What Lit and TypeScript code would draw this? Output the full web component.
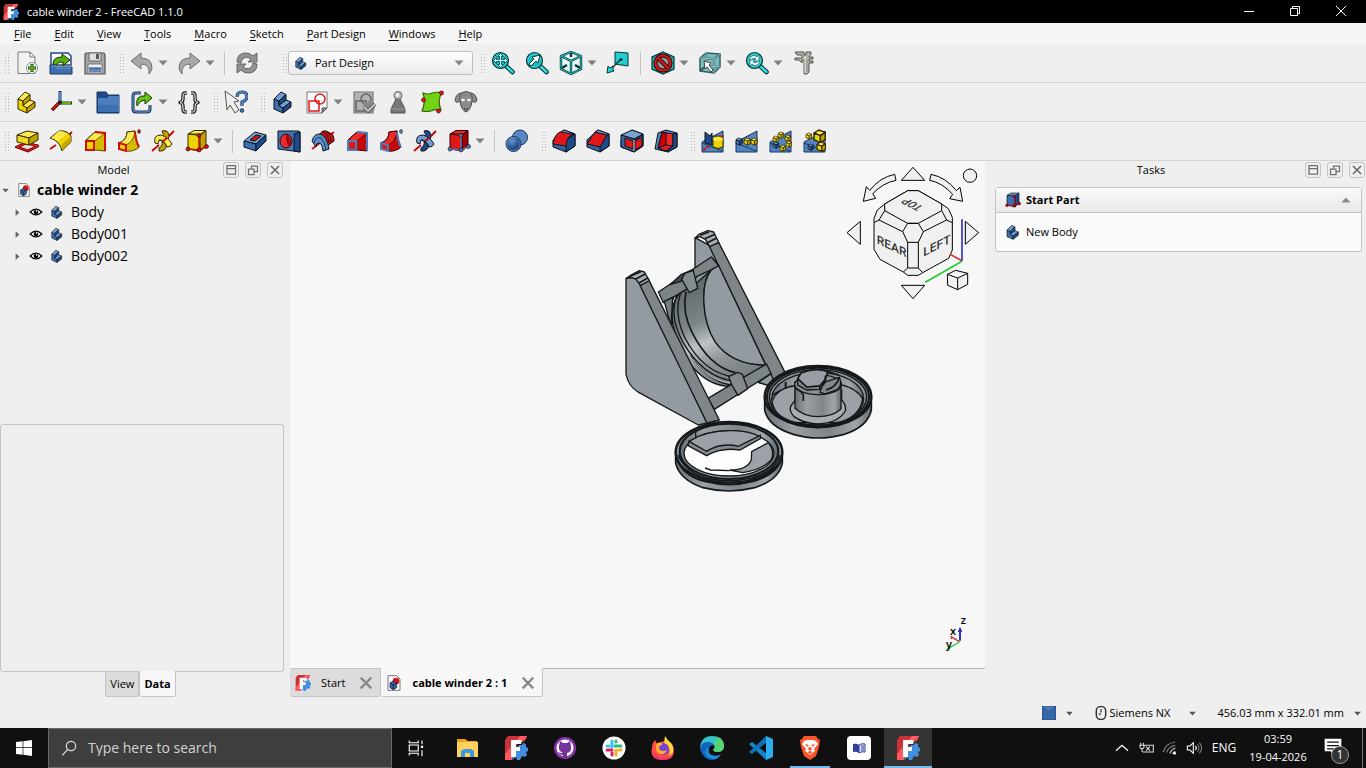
import { css, html, LitElement, nothing, svg } from 'lit';
import type { SVGTemplateResult } from 'lit';
import { customElement, property, state } from 'lit/decorators.js';
import { classMap } from 'lit/directives/class-map.js';

const BLUE = ['#729fcf', '#3f6fae', '#204a87', '#0b1521'];
const YELLOW = ['#fce94f', '#edd400', '#c4a000', '#302b00'];
const RED = ['#ef2929', '#e01818', '#a40000', '#280000'];

// stepped block, the Part Design body
const body = ([top, front, side, line]: string[]) => svg`
    <g stroke=${line} stroke-width="1" stroke-linejoin="round">
        <path fill=${front} d="M3 9l5 2v4.5l4 2.500V23l-9-4z" />
        <path fill=${top} d="M3 9l7-7 5 2.500L8 11z" />
        <path fill=${side} d="M8 11l7-6.500V10l-7 5.500z" />
        <path fill=${top} d="M8 15.500L15 10l5 2-8 6z" />
        <path fill=${side} d="M12 18l8-6v5l-8 6z" />
    </g>`;

const cube = ([top, front, side, line]: string[]) => svg`
    <g stroke=${line} stroke-width="1" stroke-linejoin="round">
        <path fill=${top} d="M3 5l6-3.500h12L16 5z" />
        <path fill=${front} d="M3 5l12 1.500V22L3 20z" />
        <path fill=${side} d="M15 6.500l6-5V17l-6 5z" />
    </g>`;

const datum = (face: string[], accent: string) => svg`
    ${cube(face)}
    <path d="M14 7v13M3 20l11 1 7-3" stroke=${accent} stroke-width="1.500" fill="none" />
    <g fill=${accent} stroke="#280000" stroke-width=".6">
        <circle cx="14" cy="6.500" r="1.800" /><circle cx="3" cy="20" r="2" />
        <circle cx="14" cy="21" r="2" /><circle cx="21.500" cy="17.500" r="2" />
    </g>`;

const loft = (face: string[], edge: string) => svg`
    <path d="M3 11 12 3 22 4v18l-9-1H3z" fill=${face[1]} stroke=${face[3]} stroke-linejoin="round" />
    <path d="M3 11 12 3 22 4 12 12z" fill=${face[0]} stroke=${face[3]} stroke-width=".8" />
    <path d="M12 12 22 4v18l-10-1z" fill=${face[2]} opacity=".5" />
    <path d="M12 3l10 1v18" fill="none" stroke=${edge} stroke-width="2" />
    <path d="M3 12h8v9H3z" fill=${face[1]} stroke=${edge} stroke-width="2" />`;

const pipe = (face: string[], edge: string) => svg`
    <path d="M2 14Q10 11 10 3l8-1q1 11 4 16-5 5-13 4z" fill=${face[1]} stroke=${face[3]} />
    <path d="M10 3l8-1q-1 11-9 14l-7-2q8-3 8-11z" fill=${face[0]} stroke=${face[3]} stroke-width=".8" />
    <path d="M9 16q8-3 9-12 1 9 4 14-5 5-13 4z" fill=${face[2]} opacity=".5" />
    <path d="M18 3q1 10 4 15" fill="none" stroke=${edge} stroke-width="2" />
    <path d="M2 14l7 2v6l-7-2z" fill=${face[1]} stroke=${edge} stroke-width="2" />
    <ellipse cx="22" cy="2.500" rx="1.500" ry="2" fill=${edge} stroke="#222" stroke-width=".5" />`;

const helix = (face: string[]) => svg`
    <g stroke=${face[3]} stroke-linejoin="round">
        <path d="M11 2q7-2 7 6l-2 4-5-4q3-2 0-6z" fill=${face[2]} />
        <path d="M8 22q7 1 8-7l-5-3q1 5-3 7z" fill=${face[2]} />
        <path d="M4 14Q2 6 10 6q7 2 11 9-1 3-5 3-4-7-8-7l-1 4z" fill=${face[0]} />
        <path d="M8 11q5-1 8 7" fill="none" stroke-width=".8" />
    </g>
    <path d="M1 22l7-6M12 12l4-3M18 7l5-5" stroke="#cc0000" stroke-width="1.800" />`;

const lens = (inner: SVGTemplateResult) => svg`
    <path d="M14.500 14.500l7 6.500" stroke="#042a2a" stroke-width="4.500" stroke-linecap="round" />
    <path d="M14.500 14.500l7 6.500" stroke="#34e0e2" stroke-width="2.500" stroke-linecap="round" />
    <circle cx="9.500" cy="9.500" r="8" fill="#16a5a8" stroke="#063c3e" stroke-width="1.200" />
    <circle cx="9.500" cy="9.500" r="6.500" fill="#1cb9bc" stroke="#4ce0e0" stroke-width=".8" />
    ${inner}`;

const miniCube = (x: number, y: number, s: number, c: string[]) => svg`
    <g transform="translate(${x} ${y}) scale(${s})" stroke=${c[3]} stroke-width=".9" stroke-linejoin="round">
        <path fill=${c[0]} d="M0 2l3-2 4 1.500-3 2z" /><path fill=${c[1]} d="M0 2l4 1.500V8L0 6z" />
        <path fill=${c[2]} d="M4 3.500l3-2V6L4 8z" />
    </g>`;

const slab = svg`
    <path d="M1 13 22 2v21H1z" fill="#5484bf" stroke="#17365f" />
    <path d="M1 14l20 8" stroke="#17365f" />`;

const chamfered = (red: SVGTemplateResult) => svg`
    <g stroke="#0b1521" stroke-linejoin="round">
        <path d="M1 11 12 1l11 4v12l-9 6-13-5z" fill="#3465a4" />
        <path d="M14 11l9-6v12l-9 6z" fill="#204a87" />
        ${red}
    </g>`;

const freecad = svg`
    <path d="M4 0h19l-3 6-6 1-8 17H1V4z" fill="#cb333b" />
    <path d="M16 0h7l-2 4H11L8 24H1v-6z" fill="#ff585d" />
    <path d="M15 9h3l1-2 3 1v3l2 1v3l-2 1 1 3-2 2-3-1-2 4h-3l-1-3-4 3 2-10z" fill="#418fde" />
    <path d="M7 4h11l-1 4h-5v3h4v4h-4v6H7z" fill="#fff" />`;

const documentIcon = svg`
    <path d="M3 1h13l5 5v17H3z" fill="#fafafa" stroke="#777" stroke-width="1.500" />
    <circle cx="15" cy="9" r="5" fill="#dd1111" />
    <path d="M6 12l5-3 5 3v7l-5 3-5-3z" fill="#3465a4" stroke="#0b1521" />
    <path d="M6 12l5 3 5-3M11 15v7" stroke="#0b1521" fill="none" />`;

const icons: Record<string, SVGTemplateResult> = {
    freecad,
    document: documentIcon,
    body: body(BLUE),
    part: body(YELLOW),
    startpart: datum(BLUE, '#cc0000'),
    new: svg`
        <path d="M3 1h12l5 5v16.500H3z" fill="#f2f2f0" stroke="#777" />
        <path d="M15 1v5h5z" fill="#fff" stroke="#777" />
        <circle cx="17" cy="17" r="5.500" fill="#fff" stroke="#888" />
        <path d="M17 13v8M13 17h8" stroke="#163b05" stroke-width="3" />
        <path d="M17 13.500v7M13.500 17h7" stroke="#5fc018" stroke-width="1.500" />`,
    open: svg`
        <path d="M2 2h17l3 3v9H2z" fill="#fff" stroke="#204a87" stroke-width="1.500" />
        <path d="M4 13q0-7 9-7V3l8 6-7 6v-4q-6 0-7 4z" fill="#58b010" stroke="#173004" />
        <path d="M1 14h6v2h16v7H1z" fill="#3c70b4" stroke="#17365f" />
        <path d="M2 15h5l1 2h14" fill="none" stroke="#729fcf" />`,
    save: svg`
        <path d="M3 2h18l1 2v19H2V3z" fill="#a6a6a6" stroke="#555" stroke-width="1.200" />
        <path d="M6 2h12v8H6z" fill="#dedede" stroke="#666" /><path d="M13 3h3v5h-3z" fill="#555" />
        <path d="M5 13h14v9H5z" fill="#eee" stroke="#777" /><path d="M6 17h12v4H6z" fill="#6386b4" />
        <path d="M6 17h12" stroke="#204a87" />`,
    undo: svg`<path d="M1 10 11 2v5q11 0 11 10-1 4-3 6 1-10-8-10v5z" fill="#a8a8a8" stroke="#707070" stroke-linejoin="round" />`,
    redo: svg`<path d="M23 10 13 2v5q-11 0-11 10 1 4 3 6-1-10 8-10v5z" fill="#a8a8a8" stroke="#707070" stroke-linejoin="round" />`,
    refresh: svg`
        <g fill="#929292" stroke="#646464" stroke-linejoin="round">
            <path d="M2 11q0-9 9-9 4 0 7 3l4-3v9h-9l3-3q-6-4-9 1-1 2-1 3z" />
            <path d="M22 13q0 9-9 9-4 0-7-3l-4 3v-9h9l-3 3q6 4 9-1 1-2 1-3z" />
        </g>`,
    fit: lens(svg`<path d="M9.500 2.500l3 3h-2v3h3v-2l3 3-3 3v-2h-3v3h2l-3 3-3-3h2v-3h-3v2l-3-3 3-3v2h3v-3h-2z" fill="#bff" stroke="#063c3e" stroke-width=".8" />`),
    fitselection: lens(svg`<path d="M4 13l5-5-2-2 8-2-2 8-2-2-5 5z" fill="#fff" stroke="#063c3e" />`),
    iso: svg`
        <path d="M12 1l10 4v13l-10 5-10-5V5z" fill="#e8f6f6" stroke="#073638" stroke-width="2.400" stroke-linejoin="round" />
        <path d="M2 5l10 5 10-5M12 10v13M12 2v4M3 17l5-3M21 17l-5-3" fill="none" stroke="#073638" stroke-width="2.400" />
        <path d="M12 1l10 4v13l-10 5-10-5V5zM2 5l10 5 10-5M12 10v13" fill="none" stroke="#29c8cb" stroke-width="1" />`,
    view: svg`
        <path d="M9 1l13 1v13l-13-2z" fill="#24cdd0" stroke="#073638" />
        <path d="M15 8 5 18" stroke="#073638" stroke-width="1.500" /><circle cx="15" cy="8.500" r="1.500" fill="#073638" />
        <path d="M1 22l1-7 2 2 3-2v3l1 2z" fill="#24cdd0" stroke="#073638" />`,
    clip: svg`
        <path d="M12 1l11 5v12l-11 5-11-5V6z" fill="#1aaeb2" stroke="#073638" stroke-width="1.200" />
        <circle cx="12" cy="12" r="7.500" fill="#8d9596" stroke="#280000" stroke-width="4" />
        <circle cx="12" cy="12" r="7.500" fill="none" stroke="#dd1818" stroke-width="2.200" />
        <path d="M7 7l10 10" stroke="#280000" stroke-width="4" /><path d="M7 7l10 10" stroke="#dd1818" stroke-width="2.200" />`,
    selectbox: svg`
        <path d="M2 7l6-5 14 1v13l-6 6-14-2z" fill="#79bec0" stroke="#325f61" stroke-width="1.500" stroke-linejoin="round" />
        <path d="M2 7l14 1v14M16 8l6-5M8 2v13l-6 5M8 15l14 1" fill="none" stroke="#325f61" stroke-width="2.200" />
        <path d="M2 7l14 1v14M16 8l6-5M8 2v13M8 15l14 1" fill="none" stroke="#bdecee" stroke-width=".8" />
        <path d="M6 10l7 2-2 2 4 5-2 2-4-5-2 2z" fill="#fff" stroke="#444" />`,
    zoomstyle: lens(svg`<path d="M4 8q4-6 8-2l2-2v6H9l2-2q-3-2-5 1zM15 11q-4 6-8 2l-2 2V9h5l-2 2q3 2 5-1z" fill="#dff" stroke="#396869" stroke-width=".7" />`),
    measure: svg`
        <path d="M3 1h9v3h2V1h5v2l-2 3h4v2h-4v2h4v2h-4v9l-2 2h-3V9h-2v3L7 9H3V7h7V4H5z" fill="#b5b5ae" stroke="#50504c" stroke-linejoin="round" />
        <path d="M13 5v17" stroke="#e9e9e5" /><path d="M15 9v12" stroke="#666" stroke-dasharray="1 1" />`,
    axes: svg`
        <path d="M11 1v11" stroke="#17365f" stroke-width="3" /><path d="M11 2v10" stroke="#5b8cc8" stroke-width="1.800" />
        <path d="M11 13h12" stroke="#173004" stroke-width="3" /><path d="M12 13h10" stroke="#73d216" stroke-width="1.600" />
        <path d="M11 12l-8 8" stroke="#280000" stroke-width="3.200" /><path d="M10 13l-7 6.500" stroke="#dd1818" stroke-width="1.800" />
        <circle cx="11" cy="12.500" r="2" fill="#222" />`,
    folder: svg`
        <path d="M1 2h9l2 3h11v18H1z" fill="#204a87" stroke="#17365f" />
        <path d="M2 8h9l2-2h10v16H2z" fill="#4c7fbf" /><path d="M2 15h20v7H2z" fill="#3c70b4" />`,
    link: svg`
        <path d="M11 3H6Q3 3 3 6v13q0 3 3 3h11q3 0 3-3v-4" fill="none" stroke="#17365f" stroke-width="3" />
        <path d="M11 3H6Q3 3 3 6v13q0 3 3 3h11q3 0 3-3v-4" fill="none" stroke="#729fcf" />
        <path d="M7 16Q5 5 15 6V2l7 6-7 6v-4q-5 0-8 6z" fill="#63c412" stroke="#173004" />`,
    braces: svg`
        <g fill="none" stroke-linejoin="round">
            <path d="M10 3H8Q6 3 6 6v3q0 3-3 3.500Q6 13 6 16v3q0 3 2 3h2M14 3h2q2 0 2 3v3q0 3 3 3.500-3 .5-3 3.500v3q0 3-2 3h-2" stroke="#2b2f31" stroke-width="3.500" />
            <path d="M10 3H8Q6 3 6 6v3q0 3-3 3.500Q6 13 6 16v3q0 3 2 3h2M14 3h2q2 0 2 3v3q0 3 3 3.500-3 .5-3 3.500v3q0 3-2 3h-2" stroke="#eee" />
        </g>`,
    help: svg`
        <path d="M1 1l14 10-5 1 5 8-4 3-5-8-3 5z" fill="#eee" stroke="#555" stroke-linejoin="round" />
        <path d="M13 7q0-5 5-5t5 5q0 3-5 5v4" fill="none" stroke="#17365f" stroke-width="3.200" />
        <path d="M13 7q0-5 5-5t5 5q0 3-5 5v4" fill="none" stroke="#5b8cc8" stroke-width="1.600" />
        <circle cx="18" cy="20.500" r="1.800" fill="#4579b7" stroke="#17365f" />`,
    sketch: svg`
        <path d="M2 2h20v16l-5 5H2z" fill="#fff" stroke="#777" /><path d="M22 18h-5v5z" fill="#888" stroke="#555" />
        <path d="M4 11h10v10H4z" fill="none" stroke="#e01818" stroke-width="1.500" />
        <circle cx="15" cy="9" r="5" fill="none" stroke="#e01818" stroke-width="1.500" />`,
    validate: svg`
        <path d="M2 2h19v21H2z" fill="#b2b2b2" stroke="#777" stroke-width="1.200" />
        <path d="M4 11h10v10H4z" fill="none" stroke="#666" stroke-width="1.500" />
        <circle cx="14" cy="9" r="5" fill="none" stroke="#666" stroke-width="1.500" />
        <circle cx="17" cy="17" r="6" fill="#888" /><path d="M12 17l4 4 7-7" fill="none" stroke="#555" stroke-width="3.500" />
        <path d="M12 17l4 4 7-7" fill="none" stroke="#c8c8c8" stroke-width="1.800" />`,
    pawn: svg`
        <path d="M10 9h4l5 10v4H5v-4z" fill="#777" stroke="#555" />
        <path d="M5 19h14" stroke="#999" /><circle cx="12" cy="5.500" r="4" fill="#b8b8b8" stroke="#666" />
        <circle cx="11.500" cy="5" r="2" fill="#eee" />`,
    subshape: svg`
        <path d="M3 3q6 2 9 0 5-1 10-1-5 9-1 18-7-1-10 1-5 1-9 0 4-9 1-18z" fill="#73d216" stroke="#356507" stroke-width="1.200" />
        <g fill="#e01818" stroke="#550000" stroke-width=".7"><circle cx="21.500" cy="3" r="2" /><circle cx="3.500" cy="10" r="2" /><circle cx="18.500" cy="21" r="2" /></g>`,
    clone: svg`
        <path d="M7 3q5-3 10 0 5 1 6 7-1 4-5 1-1 9-6 11-5-2-6-11-4 3-5-1 1-6 6-7z" fill="#8b8b8b" stroke="#4b4b4b" />
        <path d="M7 4q-2 3-1 7M17 4q2 3 1 7" stroke="#555" fill="none" /><ellipse cx="9" cy="10" rx="2" ry="1.200" fill="#eee" />
        <ellipse cx="15" cy="10" rx="2" ry="1.200" fill="#eee" /><path d="M10 18l2 2 2-2" stroke="#333" fill="none" />`,
    pad: svg`
        <path d="M2 18l9-4 12 3-10 5z" fill="#e8d8d8" stroke="#4b0000" stroke-width="2.800" />
        <path d="M2 18l9-4 12 3-10 5z" fill="none" stroke="#dd1818" stroke-width="1.400" />
        <g stroke="#302b00" stroke-linejoin="round"><path d="M2 6l10-4 11 2-9 5z" fill="#fce94f" />
        <path d="M2 6l12 3v7L2 13z" fill="#f0da20" /><path d="M14 9l9-5v7l-9 5z" fill="#c4a000" /></g>`,
    revolution: svg`
        <path d="M1 20l6-4M18 8l5-5" stroke="#cc0000" stroke-width="1.800" />
        <path d="M1 9l9-7q8-1 12 5v6l-9 9Q11 12 1 9z" fill="#edd400" stroke="#302b00" stroke-linejoin="round" />
        <path d="M2 9l8-7q5 0 8 3l-9 7q-3-2-7-3z" fill="#fce94f" />
        <path d="M13 15l9-8v6l-9 9z" fill="#c9a800" />`,
    loft: loft(YELLOW, '#cc1111'),
    sweep: pipe(YELLOW, '#cc1111'),
    helix: helix(YELLOW),
    primitive: datum(YELLOW, '#cc1111'),
    pocket: svg`
        <g stroke="#0b1521" stroke-linejoin="round"><path d="M1 12 12 3l11 3-10 9z" fill="#729fcf" />
        <path d="M1 12l12 3v7L1 18z" fill="#3f6fae" /><path d="M13 15l10-9v6l-10 10z" fill="#204a87" />
        <path d="M7 11l6-5 5 1-6 5z" fill="#cc1111" /></g>`,
    hole: svg`
        <g stroke="#0b1521"><path d="M1 2h21l1 1v20l-7-1-15-2z" fill="#4677b5" /><path d="M17 5l6-2v20l-6-1z" fill="#204a87" />
        <ellipse cx="9" cy="12" rx="6" ry="7" fill="#ef2929" /><path d="M9 5q7 4 4 13Q8 14 9 5z" fill="#a40000" stroke="none" /></g>`,
    groove: svg`
        <path d="M1 20 23 3" stroke="#cc1111" stroke-width="1.800" />
        <path d="M9 5q2-4 6-3l4 2q4 1 4 8l-7 5z" fill="#cc1111" stroke="#280000" />
        <path d="M12 3q5 2 6 11M16 3q4 3 4 10" fill="none" stroke="#280000" stroke-width=".8" />
        <path d="M1 12Q3 4 10 5q6 3 8 15l-6 2q-1-8-4-8-3 0-3 4z" fill="#5b8cc8" stroke="#0b1521" />
        <path d="M3 14q2-7 7-5 4 4 5 12" fill="none" stroke="#17365f" />`,
    subloft: loft(RED, '#4a7ebd'),
    subsweep: pipe(RED, '#4a7ebd'),
    subhelix: helix(BLUE),
    subprimitive: datum(RED, '#4a7ebd'),
    boolean: svg`
        <defs><radialGradient id="ball" cx=".4" cy=".3"><stop offset="0" stop-color="#6597d2" /><stop offset="1" stop-color="#204a87" /></radialGradient></defs>
        <circle cx="15" cy="8.500" r="7.500" fill="#5788c3" stroke="#17365f" />
        <circle cx="8.500" cy="15" r="7.500" fill="url(#ball)" stroke="#17365f" /><circle cx="8.500" cy="15" r="6.500" fill="none" stroke="#729fcf" stroke-width=".7" />`,
    fillet: chamfered(svg`<path d="M1 15Q2 4 11 2l11 3q-7 1-8 12l-13-2z" fill="#e01818" /><path d="M12 1l11 4h-3L9 3z" fill="#729fcf" />`),
    chamfer: chamfered(svg`<path d="M1 15 9 3l12 3-7 12z" fill="#e01818" /><path d="M12 1l11 4-2 1L9 3z" fill="#729fcf" />`),
    draft: chamfered(svg`<path d="M1 6l11-5 11 4-9 5z" fill="#7ba3d0" /><path d="M1 6l13 4v13L1 18z" fill="#3465a4" /><path d="M5 9l8 3v8l-8-3zM15 12l7-4v9l-7 4z" fill="#e01818" /><path d="M14 11v11" stroke="#dde6f0" />`),
    thickness: svg`
        <g stroke="#0b1521" stroke-linejoin="round"><path d="M4 4l8-3 11 3v14l-9 5-13-3z" fill="#5788c3" />
        <path d="M8 3l11 2v12l-7 5-8-3z" fill="#ef2929" /><path d="M8 3l4 1v12l-8 3z" fill="#c00" />
        <path d="M12 16l7 1-7 5-8-3z" fill="#dd2222" /><path d="M19 5l4-1v14l-9 5v-2l5-4z" fill="#204a87" /></g>`,
    mirrored: svg`${slab}<path d="M4 3l5 4 2-3v12l-7-2z" fill="#204a87" stroke="#0b1521" />
        <path d="M12 10q0-3 5-3t5 3v8q-5 3-10 0z" fill="#edd400" stroke="#302b00" /><ellipse cx="17" cy="10" rx="5" ry="2" fill="#fce94f" />
        <path d="M2 21l6-4M20 8l3-2" stroke="#cc1111" stroke-width="2" stroke-dasharray="3 1" />`,
    linear: svg`${slab}${miniCube(1, 9, 0.9, BLUE)}${miniCube(9, 9, 0.9, YELLOW)}${miniCube(16, 9, 0.9, YELLOW)}`,
    polar: svg`${slab}${miniCube(9, 3, 0.8, YELLOW)}${miniCube(16, 6, 0.8, YELLOW)}${miniCube(4, 7, 0.8, YELLOW)}${miniCube(17, 12, 0.8, YELLOW)}${miniCube(4, 13, 0.8, BLUE)}${miniCube(11, 16, 0.8, YELLOW)}`,
    multi: svg`${slab}${miniCube(11, 1, 1.6, YELLOW)}${miniCube(3, 4, 0.8, YELLOW)}${miniCube(14, 13, 1.2, YELLOW)}${miniCube(5, 15, 0.8, BLUE)}`,
    caret: svg`<path d="M3 7h18l-9 10z" fill="currentColor" />`,
    close: svg`<path d="M4 4l16 16M20 4 4 20" stroke="currentColor" stroke-width="3.500" />`,
    dock: svg`<path d="M4 3h17v17H4zM4 9h17" fill="none" stroke="currentColor" stroke-width="2.500" />`,
    float: svg`<path d="M3 10h11v11H3zM9 10V4h12v11h-7" fill="none" stroke="currentColor" stroke-width="2.500" />`,
    eye: svg`<path d="M2 12q10-10 20 0-10 10-20 0z" fill="#fff" stroke="#000" stroke-width="2" /><circle cx="12" cy="12" r="4" fill="#000" /><circle cx="13" cy="10" r="1.500" fill="#fff" />`,
    mouse: svg`<rect x="4" y="1" width="16" height="22" rx="7" fill="#eee" stroke="#333" stroke-width="2.500" /><path d="M12 5v6M8 14h4" stroke="#333" stroke-width="2" />`,
    envelope: svg`<path d="M0 0h24v24H0z" fill="#3566a6" /><path d="M0 0l12 10L24 0" fill="#4b7bb8" stroke="#2b5796" /><path d="M0 0h24v24H0z" fill="none" stroke="#17365f" />`,
    windows: svg`<path d="M0 3l10-1v9H0zM11 2l13-2v11H11zM0 12h10v10L0 21zM11 12h13v12l-13-2z" fill="#fff" />`,
    search: svg`<circle cx="15" cy="9" r="7" fill="none" stroke="#ddd" stroke-width="1.800" /><path d="M10 14l-8 9" stroke="#ddd" stroke-width="1.800" />`,
    taskview: svg`<path d="M3 2v3h12V2M3 22v-3h12v3M3 8h12v8H3zM20 2v5M20 15v8" fill="none" stroke="#fff" stroke-width="1.500" /><path d="M18.500 9h3v3h-3z" fill="#fff" />`,
    explorer: svg`
        <path d="M2 3h8l3 2h9v5H2z" fill="#e8a317" /><path d="M2 6h21v15H2z" fill="#ffd35b" />
        <path d="M6 21v-6l3-2h7l3 2v6h-4v-4h-5v4z" fill="#3a97e0" />`,
    github: svg`
        <circle cx="12" cy="12" r="11" fill="#8534a8" /><circle cx="12" cy="12" r="8.500" fill="#fff" />
        <path d="M7 5l3 2h4l3-2 1 5q1 6-4 7v5h-4v-3q-4 0-5-3 2 1 3 1h2q-5-2-4-7z" fill="#76339a" />`,
    slack: svg`
        <circle cx="12" cy="12" r="11.500" fill="#fff" />
        <g stroke-width="3" stroke-linecap="round" fill="none">
            <path d="M10 5v6M5 10h2" stroke="#36c5f0" /><path d="M19 10h-6M14 5v1" stroke="#2eb67d" />
            <path d="M14 19v-5M17 14h2" stroke="#ecb22e" /><path d="M5 14h5M10 17v2" stroke="#e01e5a" />
        </g>`,
    firefox: svg`
        <path d="M14 1l5 6 3 3q4 14-10 14T1 12q0-5 3-8l2 4q4-3 8-3z" fill="#ff4f3e" />
        <path d="M14 0q2 4 7 8 4 9-4 14 5-10-4-15z" fill="#ffd43c" />
        <circle cx="12" cy="13" r="6" fill="#7542d8" /><path d="M5 8q3-3 7 0l-3 2q-2 2 0 4 3 2 7 0-2 5-7 4-5-2-4-10z" fill="#ffae2b" />
        <path d="M2 13q2 9 11 9 5 0 8-5-1 7-10 7T2 13z" fill="#f52b77" />`,
    edge: svg`
        <path d="M0 12Q1 0 12 0t12 10q0 6-7 6-3 0-4-2 4-4-1-6Q4 6 0 12z" fill="#34c5cf" />
        <path d="M12 0q12 0 12 10 0 6-7 6-3 0-4-2 4-4-1-6 5-2 5-7z" fill="#5ad85c" opacity=".8" />
        <path d="M0 13Q1 5 9 6q5 1 6 4-4-2-6 2-2 7 6 8 4 0 6-2-3 6-10 6T0 13z" fill="#1265be" />
        <path d="M9 11q-3 8 6 9 4 0 6-2-2 4-6 5-8 0-10-6 0-4 4-6z" fill="#1b8ed8" />`,
    vscode: svg`
        <path d="M0 8l3-2 15 12-1 6z" fill="#1684cb" /><path d="M0 16l3 2L18 6l-1-6z" fill="#0b70b5" />
        <path d="M17 0l7 3v18l-7 3z" fill="#2badf1" />`,
    brave: svg`
        <path d="M6 0h12l2 3 2 1-1 7-3 9-6 4-6-4-3-9-1-7 2-1z" fill="#fb542b" />
        <path d="M6 5l3-1h6l3 1 2 3-4 5 1 2-5 4-5-4 1-2-4-5z" fill="#fff" />
        <path d="M7 8l4 1-2 2zM17 8l-4 1 2 2zM10 13l2 2 2-2-1-2h-2zM9 16l3-1 3 1-3 2z" fill="#fb542b" />`,
    reader: svg`
        <rect width="24" height="24" rx="4" fill="#fff" /><path d="M6 8q4-1 6 1v8q-3-2-6-1z" fill="#303f9f" />
        <path d="M12 9q3-2 6-1v8q-3-1-6 1zM14 10h3M14 12h3M14 14h3" fill="#dfe3ff" stroke="#303f9f" />`,
    chevron: svg`<path d="M3 16l9-8 9 8" fill="none" stroke="#fff" stroke-width="2" />`,
    battery: svg`<path d="M9 8h14v10H7M4 4v4M8 4v4M3 8h6v3q0 2-3 2t-3-2zM6 13v5M12 10l6 6M18 10l-6 6" fill="none" stroke="#ddd" stroke-width="1.600" />`,
    wifi: svg`<g fill="none" stroke-width="1.800"><path d="M2 18Q5 5 20 3M7 19q2-9 13-11" stroke="#777" /><path d="M12 20q2-6 8-8M16 21q1-3 4-4" stroke="#ccc" /></g><circle cx="19" cy="20" r="2" fill="#fff" />`,
    volume: svg`<path d="M2 9h4l5-5v16l-5-5H2z" fill="none" stroke="#fff" stroke-width="1.600" /><path d="M14 9q3 3 0 6" fill="none" stroke="#fff" stroke-width="1.600" /><path d="M17 6q5 6 0 12M20 4q7 8 0 16" fill="none" stroke="#777" stroke-width="1.600" />`,
    notice: svg`<path d="M2 1h20v15h-9v5l-4-5H2z" fill="#fff" /><path d="M5 5h14M5 9h14M5 13h8" stroke="#111" stroke-width="1.500" />`,
};

@customElement('cad-icon')
export class CadIcon extends LitElement {
    static override styles = css`
        :host {
            display: inline-flex;
            width: 24px;
            height: 24px;
            flex: none;
        }
        svg {
            width: 100%;
            height: 100%;
        }
    `;

    @property({ type: String })
    name = '';

    override render() {
        return html`<svg viewBox="0 0 24 24" aria-hidden="true">${icons[this.name] ?? nothing}</svg>`;
    }
}

type Tool = { icon: string; label: string; menu?: boolean } | 'separator' | 'workbench';

const tool = (icon: string, label: string, menu = false): Tool => ({ icon, label, menu });

const toolbars: Tool[][][] = [
    [
        [tool('new', 'New'), tool('open', 'Open'), tool('save', 'Save')],
        [tool('undo', 'Undo', true), tool('redo', 'Redo', true), 'separator', tool('refresh', 'Refresh')],
        ['workbench'],
        [
            tool('fit', 'Fit all'), tool('fitselection', 'Fit selection'), tool('iso', 'Isometric', true),
            tool('view', 'Align to selection'), 'separator', tool('clip', 'Draw style', true),
            tool('selectbox', 'Selection filter', true), tool('zoomstyle', 'Sync view', true), tool('measure', 'Measure'),
        ],
    ],
    [
        [
            tool('part', 'Create part'), tool('axes', 'Coordinate system', true), tool('folder', 'Create group'),
            tool('link', 'Make link', true), tool('braces', 'Variable set'),
        ],
        [tool('help', 'What is this?')],
        [
            tool('body', 'Create body'), tool('sketch', 'Create sketch', true), tool('validate', 'Validate sketch'),
            tool('pawn', 'Check geometry'), tool('subshape', 'Sub-shape binder'), tool('clone', 'Clone'),
        ],
    ],
    [
        [
            tool('pad', 'Pad'), tool('revolution', 'Revolution'), tool('loft', 'Additive loft'),
            tool('sweep', 'Additive pipe'), tool('helix', 'Additive helix'), tool('primitive', 'Additive primitive', true),
            'separator', tool('pocket', 'Pocket'), tool('hole', 'Hole'), tool('groove', 'Groove'),
            tool('subloft', 'Subtractive loft'), tool('subsweep', 'Subtractive pipe'),
            tool('subhelix', 'Subtractive helix'), tool('subprimitive', 'Subtractive primitive', true),
            'separator', tool('boolean', 'Boolean'),
        ],
        [tool('fillet', 'Fillet'), tool('chamfer', 'Chamfer'), tool('draft', 'Draft'), tool('thickness', 'Thickness')],
        [
            tool('mirrored', 'Mirrored'), tool('linear', 'Linear pattern'),
            tool('polar', 'Polar pattern'), tool('multi', 'Multi transform'),
        ],
    ],
];

const menus = ['File', 'Edit', 'View', 'Tools', 'Macro', 'Sketch', 'Part Design', 'Windows', 'Help'];

@customElement('cad-toolbars')
export class CadToolbars extends LitElement {
    static override styles = css`
        :host {
            display: block;
        }
        .row {
            display: flex;
            gap: 3px;
            height: 38px;
            border-bottom: 1px solid #d4d4d4;
        }
        .bar {
            display: flex;
            align-items: center;
        }
        .bar:has(+ .workbench) {
            padding-right: 11px;
        }
        .handle {
            width: 6px;
            height: 20px;
            margin-left: 4px;
            background: radial-gradient(circle, #b5b5b5 1px, transparent 1px) 0 0 / 3px 3px;
        }
        button {
            display: flex;
            align-items: center;
            justify-content: center;
            width: 34px;
            height: 34px;
            padding: 0;
            border: 0;
            background: none;
        }
        .more {
            width: 15px;
            margin-left: -2px;
            justify-content: flex-start;
            color: #808080;
        }
        .more cad-icon {
            width: 12px;
            height: 12px;
        }
        .separator {
            width: 1px;
            height: 23px;
            margin: 0 5px;
            background: #c4c4c4;
        }
        .picker {
            display: flex;
            align-items: center;
            box-sizing: border-box;
            width: 185px;
            height: 24px;
            padding: 0 7px 0 5px;
            border: 1px solid #bdbdbd;
            border-radius: 3px;
            background: linear-gradient(#fdfdfd, #ebebeb);
            color: #888;
        }
        .picker cad-icon {
            width: 14px;
            height: 14px;
        }
        .picker .arrow {
            width: 12px;
            height: 12px;
        }
        select {
            flex: 1;
            appearance: none;
            border: 0;
            padding: 0 7px;
            background: none;
            color: #000;
            font: inherit;
        }
    `;

    override render() {
        return toolbars.map((row) => html`<div class="row">${row.map((bar) => this.bar(bar))}</div>`);
    }

    private bar(tools: Tool[]) {
        return html`
            <div class=${classMap({ bar: true, workbench: tools[0] === 'workbench' })} role="toolbar">
                <span class="handle"></span>
                ${tools.map((item) => this.item(item))}
            </div>
        `;
    }

    private item(item: Tool) {
        if (item === 'separator') return html`<span class="separator"></span>`;
        if (item === 'workbench') {
            return html`
                <label class="picker">
                    <cad-icon name="body"></cad-icon>
                    <select aria-label="Workbench">
                        <option>Part Design</option>
                    </select>
                    <cad-icon class="arrow" name="caret"></cad-icon>
                </label>
            `;
        }
        return html`
            <button aria-label=${item.label}><cad-icon name=${item.icon}></cad-icon></button>
            ${item.menu
                ? html`<button class="more" aria-label="${item.label} options"><cad-icon name="caret"></cad-icon></button>`
                : nothing}
        `;
    }
}

@customElement('cad-viewport')
export class CadViewport extends LitElement {
    static override styles = css`
        :host {
            display: block;
            position: relative;
            overflow: hidden;
            background: #f7f7f7;
        }
        svg {
            position: absolute;
        }
        .model {
            left: 46%;
            top: 59px;
            width: 280px;
            height: 280px;
        }
        .navigation {
            top: 0;
            right: 0;
            width: 145px;
            height: 149px;
        }
        .gizmo {
            right: 0;
            bottom: 0;
            width: 55px;
            height: 63px;
        }
        text {
            font-family: 'Open Sans', sans-serif;
        }
        .navigation text {
            font-family: Roboto, sans-serif;
            font-weight: 500;
        }
    `;

    override render() {
        return html`${this.model()}${this.navigation()}${this.gizmo()}`;
    }

    private model() {
        return html`
            <svg class="model" viewBox="0 0 840 840" role="img" aria-label="Cable winder">
                <defs>
                    <linearGradient id="bore" x1=".3" y1="0" x2=".65" y2="1">
                        <stop offset="0" stop-color="#596264" /><stop offset=".4" stop-color="#7d8587" />
                        <stop offset=".58" stop-color="#bfc2c4" /><stop offset=".75" stop-color="#8e9497" />
                        <stop offset="1" stop-color="#737b7e" />
                    </linearGradient>
                    <linearGradient id="rim">
                        <stop offset="0" stop-color="#697174" /><stop offset=".25" stop-color="#9a9fa4" />
                        <stop offset=".6" stop-color="#7f8689" /><stop offset=".85" stop-color="#a1a5aa" />
                        <stop offset="1" stop-color="#646c70" />
                    </linearGradient>
                </defs>
                <g stroke="#15181a" stroke-width="4" stroke-linejoin="round" fill="#939aa2">
                    <path d="M255 53 298 76 494 490 475 496 445 487 400 460 255 250Z" />
                    <path d="M298 79 326 67 525 457 494 490Z" fill="#808688" />
                    <path d="M256 54 268 42 294 32 311 36 326 67 299 80 286 58 270 50Z" fill="#a8adb2" />
                    <path d="M270 46 297 36M284 56 315 43M292 68 320 54" stroke-width="5" />
                    <path d="M145 216 304 111 327 138 260 170 238 205 160 248Z" fill="#7c8385" />
                    <path
                        d="M304 150C270 190 275 300 315 365Q365 435 466 435L390 480 350 499Q270 490 218 397Q160 275 208 221L262 187Z"
                        fill="url(#bore)"
                    />
                    <path d="M304 150 326 137 467 435Q365 435 315 365C275 300 270 190 304 150Z" />
                    <g fill="none">
                        <path d="M228 215Q215 275 246 337 298 440 376 458" stroke-width="5" />
                        <path d="M212 219Q190 280 225 354 279 457 368 470" />
                        <path d="M202 222Q175 286 219 367 279 470 366 482" />
                        <path d="M192 229Q176 260 188 315M240 406Q288 481 365 496" />
                        <path d="M232 396Q285 482 360 488" stroke="#c2c7cc" stroke-width="3" />
                    </g>
                    <path d="M163 244 188 232 183 320Z" fill="#757d81" />
                    <path d="M180 194 213 164 243 151 213 184Z" fill="#444b4d" />
                    <path d="M215 178 224 160 250 151 263 205 238 218Z" fill="#858c8e" />
                    <path d="M294 535 373 488 470 432 483 461 313 568Z" fill="#7d8486" />
                    <path d="M445 487 483 461 494 490 475 496Z" />
                    <path d="M356 470 383 457 397 463 413 506 384 526 366 496Z" fill="#84898b" />
                    <path d="M48 175 80 172 95 196 291 609 265 615 86 517Q55 500 48 462Z" />
                    <path d="M90 196 117 181 328 600 291 609Z" fill="#808688" />
                    <path d="M49 175 62 166 88 152 103 156 118 182 92 196 78 178 62 171Z" fill="#a9afb4" />
                    <path d="M62 168 92 155M76 178 106 162M86 190 113 174" stroke-width="5" />
                </g>
                <g stroke="#15181a" stroke-width="4" fill="none">
                    <path d="M464 530V570Q475 620 550 643 624 665 702 643 773 621 784 570V530Z" fill="url(#rim)" stroke-width="5" />
                    <ellipse cx="624" cy="530" rx="160" ry="92" fill="#8b9195" stroke-width="7" />
                    <ellipse cx="624" cy="530" rx="153" ry="87" stroke-width="6" />
                    <ellipse cx="624" cy="531" rx="146" ry="82" stroke-width="4" />
                    <ellipse cx="623" cy="536" rx="138" ry="79" fill="url(#rim)" />
                    <path d="M489 524Q535 495 560 497M690 493Q744 507 758 537 747 596 678 608H560Q494 594 486 545 500 504 560 497H690Z" fill="#9ba1a7" />
                    <path d="M527 486V506M478 560Q520 615 620 622 730 617 777 555" stroke-width="6" />
                    <path d="M542 559Q537 574 552 590 585 612 626 612 690 607 707 570 706 549 695 541V510H556V540Z" fill="#a7adb2" />
                    <path d="M555 485V565Q582 590 624 590 668 590 693 567V488Z" fill="url(#rim)" />
                    <ellipse cx="624" cy="494" rx="70" ry="30" fill="#8b9194" />
                    <path d="M640 488 688 472Q700 496 680 510L646 522 630 517Z" fill="#82898c" />
                    <path d="M563 476 573 459Q617 442 653 455L646 478 629 498 590 501Z" fill="#989ea4" stroke-width="5" />
                    <path d="M563 476V495L590 510 629 508V498L590 501Z" fill="#7c8386" />
                    <path d="M629 508 646 486V467M653 455 687 465M648 510Q680 502 688 472" stroke-width="5" />
                    <path d="M557 505 572 514 580 525V543" stroke-width="5" />
                </g>
                <g stroke="#15181a" stroke-width="4" fill="none">
                    <path d="M197 696V730Q209 779 279 803 357 823 434 803 507 779 517 730V696Z" fill="url(#rim)" stroke-width="5" />
                    <ellipse cx="357" cy="697" rx="160" ry="91" fill="#8d9397" stroke-width="7" />
                    <path d="M201 713Q215 766 285 784 357 803 432 783 506 760 514 711" stroke-width="6" />
                    <path d="M204 705Q228 759 293 775 357 790 425 774 497 754 510 706" stroke-width="5" />
                    <ellipse cx="357" cy="694" rx="148" ry="83" stroke-width="6" fill="url(#rim)" />
                    <ellipse cx="357" cy="700" rx="135" ry="68" fill="#fdfdfd" />
                    <path d="M237 664Q286 632 361 632 423 631 451 652L387 682Q335 674 289 701Z" fill="#9ba1a7" />
                    <path d="M237 664 289 694Q335 666 385 679L451 646V656L390 690Q334 681 290 707L234 677Z" fill="#858b90" />
                    <path d="M425 695 475 668Q495 693 484 719 460 748 398 758L359 750Q410 751 424 720Z" fill="#9ca2a8" />
                    <path d="M285 744 302 750 359 752M257 630V652" />
                </g>
            </svg>
        `;
    }

    private navigation() {
        return html`
            <svg class="navigation" viewBox="0 3 435 447" role="img" aria-label="Navigation cube">
                <g fill="#f0f0f0" stroke="#000" stroke-width="3" stroke-linejoin="round">
                    <path d="M184 61 219 22 254 61ZM184 376H254L219 416ZM21 218 61 184V253ZM376 184 416 218 376 253Z" />
                    <circle cx="390" cy="47" r="20" />
                    <path d="M164 43 168 61Q130 68 98 101L107 115 70 124 79 80 89 91Q120 52 164 43Z" />
                    <path d="M273 43 269 61Q307 68 338 103L329 116 368 124 360 82 349 92Q318 52 273 43Z" />
                    <path
                        d="M203 92H235L305 132 325 146 337 172V270L326 295 248 338 235 346H203L190 336 120 298 102 268V175L112 150 134 132Z"
                    />
                    <path
                        d="M203 92H235L305 132V152L235 190H203L134 152V132ZM203 190H235L250 215 235 247H203L188 215Z"
                    />
                    <path
                        fill="none"
                        d="M134 152 117 180 102 188M117 180 188 215M305 152 320 180 337 188M320 180 250 215M203 247V324L190 336M235 247V324L248 338M203 324H235"
                    />
                    <path d="M322 343 347 331 383 340V373L353 389 323 376ZM322 343 353 354 383 340M353 354V389" />
                </g>
                <g fill="#333" font-size="36">
                    <text transform="translate(110 250) skewY(25)">REAR</text>
                    <text transform="translate(250 290) skewY(-27)">LEFT</text>
                    <text transform="translate(252 140) rotate(207) skewX(-30)" font-size="30">TOP</text>
                </g>
                <g stroke-width="5">
                    <path d="M330 283 366 302" stroke="#c33" /><path d="M256 367 366 304" stroke="#2c3" />
                    <path d="M366 178V302" stroke="#33c" />
                </g>
            </svg>
        `;
    }

    private gizmo() {
        return html`
            <svg class="gizmo" viewBox="0 0 165 189" aria-hidden="true">
                <path d="M90 107V68M84 78H96" stroke="#33c" stroke-width="6" />
                <path d="M88 110 62 94M64 93V102" stroke="#c33" stroke-width="4" />
                <path d="M88 111 50 133M58 122V132" stroke="#2c3" stroke-width="4" />
                <g font-size="33" font-weight="600"><text x="92" y="56">z</text><text x="60" y="90">x</text><text x="48" y="130">y</text></g>
            </svg>
        `;
    }
}

const apps = ['explorer', 'freecad', 'github', 'slack', 'firefox', 'edge', 'vscode', 'brave', 'reader', 'freecad'];

@customElement('desktop-taskbar')
export class DesktopTaskbar extends LitElement {
    static override styles = css`
        :host {
            display: flex;
            height: 40px;
            background: #101010;
            color: #fff;
        }
        button {
            display: flex;
            align-items: center;
            justify-content: center;
            box-sizing: border-box;
            width: 48px;
            height: 40px;
            padding: 0;
            border: 0;
            background: none;
            color: inherit;
            font: inherit;
        }
        .start cad-icon {
            width: 16px;
            height: 16px;
        }
        .search {
            display: flex;
            align-items: center;
            gap: 11px;
            box-sizing: border-box;
            width: 344px;
            padding: 0 12px;
            border: 1px solid #686868;
            background: #3e3e3e;
        }
        .search cad-icon {
            width: 16px;
            height: 16px;
        }
        input {
            flex: 1;
            min-width: 0;
            padding: 0;
            border: 0;
            outline: 0;
            background: none;
            color: #fff;
            font: inherit;
            font-size: 14px;
        }
        input::placeholder {
            color: #d2d2d2;
        }
        .taskview cad-icon {
            width: 20px;
            height: 18px;
        }
        .apps {
            display: flex;
            gap: 1px;
            padding-left: 3px;
        }
        .running {
            border-bottom: 2px solid #76b9ed;
            padding-top: 2px;
        }
        .running:not(.active) {
            width: 40px;
            margin: 0 4px;
        }
        .active {
            background: #333;
        }
        .tray {
            display: flex;
            align-items: center;
            margin-left: auto;
        }
        .tray button {
            width: 24px;
        }
        .tray cad-icon {
            width: 16px;
            height: 16px;
        }
        .tray .language {
            width: 36px;
            font-size: 12px;
        }
        .tray .clock {
            width: 72px;
            flex-direction: column;
            font-size: 11px;
            line-height: 18px;
            white-space: nowrap;
        }
        .tray .notices {
            position: relative;
            width: 49px;
            padding-right: 10px;
            border-right: 1px solid #777;
            margin-right: 3px;
        }
        .notices cad-icon {
            width: 20px;
            height: 20px;
        }
        .count {
            position: absolute;
            right: 13px;
            bottom: 4px;
            width: 16px;
            height: 16px;
            border: 1px solid #999;
            border-radius: 50%;
            background: #333;
            font-size: 12px;
            line-height: 16px;
        }
    `;

    override render() {
        return html`
            <button class="start" aria-label="Start"><cad-icon name="windows"></cad-icon></button>
            <label class="search">
                <cad-icon name="search"></cad-icon>
                <input type="text" placeholder="Type here to search" aria-label="Search" />
            </label>
            <button class="taskview" aria-label="Task view"><cad-icon name="taskview"></cad-icon></button>
            <div class="apps">${apps.map((name, index) => this.app(name, index))}</div>
            <div class="tray">
                <button aria-label="Hidden icons"><cad-icon name="chevron"></cad-icon></button>
                <button aria-label="Battery"><cad-icon name="battery"></cad-icon></button>
                <button aria-label="Network"><cad-icon name="wifi"></cad-icon></button>
                <button aria-label="Volume"><cad-icon name="volume"></cad-icon></button>
                <button class="language">ENG</button>
                <button class="clock"><span>03:59</span><span>19-04-2026</span></button>
                <button class="notices" aria-label="Notifications">
                    <cad-icon name="notice"></cad-icon><span class="count">1</span>
                </button>
            </div>
        `;
    }

    private app(name: string, index: number) {
        const active = index === apps.length - 1;
        const classes = { running: active || name === 'brave', active };
        return html`<button class=${classMap(classes)} aria-label=${name}><cad-icon name=${name}></cad-icon></button>`;
    }
}

@customElement('app-root')
export class AppRoot extends LitElement {
    static override styles = css`
        :host {
            display: flex;
            flex-direction: column;
            min-height: 100vh;
            background: #efefef;
            color: #000;
            font-family: 'Open Sans', 'Noto Sans', sans-serif;
            font-size: 11px;
            line-height: 16px;
        }
        button {
            padding: 0;
            border: 0;
            background: none;
            color: inherit;
            font: inherit;
        }
        .title {
            display: flex;
            align-items: center;
            gap: 8px;
            height: 23px;
            padding-left: 3px;
            background: #000;
            color: #fff;
        }
        .title > cad-icon {
            width: 16px;
            height: 16px;
        }
        .window {
            display: flex;
            margin-left: auto;
            padding-right: 2px;
        }
        .window button {
            width: 46px;
            height: 21px;
        }
        .window svg {
            width: 10px;
            height: 10px;
            stroke: #fff;
            fill: none;
        }
        .menu {
            display: flex;
            gap: 23px;
            height: 21px;
            padding: 0 14px;
            background: #f5f5f5;
        }
        u {
            text-underline-offset: 2px;
        }
        .main {
            display: flex;
            flex: 1;
        }
        .left {
            display: flex;
            flex-direction: column;
            width: 284px;
            margin-right: 6px;
        }
        .dock {
            display: flex;
            gap: 6px;
            height: 17px;
            padding: 1px 1px 0 10px;
            text-align: center;
        }
        .dock span {
            flex: 1;
        }
        .dock button {
            display: flex;
            align-items: center;
            justify-content: center;
            box-sizing: border-box;
            width: 16px;
            height: 16px;
            border: 1px solid #c3c3c3;
            border-radius: 3px;
            color: #6d6d6d;
        }
        .dock cad-icon {
            width: 12px;
            height: 12px;
        }
        .tree {
            flex: 1;
            margin: 0;
            padding: 0;
            list-style: none;
            font-size: 14px;
            line-height: 22px;
        }
        .tree li {
            display: flex;
            align-items: center;
            gap: 7px;
            height: 22px;
            padding-left: 13px;
        }
        .tree .root {
            padding-left: 1px;
            font-weight: bold;
        }
        .tree cad-icon {
            width: 14px;
            height: 14px;
        }
        .tree .root .item cad-icon {
            height: 16px;
        }
        .tree .twist {
            width: 9px;
            height: 9px;
            color: #666;
        }
        li:not(.root) .twist {
            transform: rotate(-90deg);
        }
        .tree .item {
            display: flex;
            align-items: center;
            gap: 7px;
        }
        .tree .root .item {
            gap: 6px;
        }
        .properties {
            height: 246px;
            border: 1px solid #c4c4c4;
            border-radius: 3px;
        }
        .panes {
            display: flex;
            justify-content: center;
            height: 26px;
            padding-right: 3px;
        }
        .panes button {
            box-sizing: border-box;
            height: 25px;
            padding: 0 4px;
            border: 1px solid #c4c4c4;
            border-top: 0;
            border-radius: 0 0 3px 3px;
            background: #dcdcdc;
        }
        .panes .active {
            background: #f7f7f7;
            font-weight: bold;
            margin-top: -1px;
            height: 26px;
        }
        .center {
            display: flex;
            flex: 1;
            flex-direction: column;
        }
        cad-viewport {
            flex: 1;
        }
        .tabs {
            display: flex;
            height: 30px;
        }
        .tab {
            display: flex;
            align-items: center;
            box-sizing: border-box;
            height: 29px;
            padding: 0 6px 0 5px;
            border: 1px solid #c4c4c4;
            border-left: 0;
            border-radius: 0 0 3px 3px;
            background: #dcdcdc;
        }
        .tab cad-icon {
            width: 16px;
            height: 16px;
        }
        .tab button {
            display: flex;
        }
        .tab .name {
            gap: 10px;
            padding-right: 13px;
        }
        .tab .close {
            color: #888;
        }
        .tab.active {
            border-top-color: #f7f7f7;
            background: #f7f7f7;
            font-weight: bold;
        }
        .tabs .rest {
            flex: 1;
            border-top: 1px solid #b5b5b5;
        }
        .right {
            width: 381px;
        }
        .right .dock {
            padding-left: 18px;
        }
        .task {
            margin: 8px 4px 0 10px;
            border: 1px solid #c4c4c4;
            border-radius: 3px;
            background: #fafafa;
        }
        .task > button {
            display: flex;
            align-items: center;
            gap: 5px;
            width: 100%;
            padding: 0 9px;
        }
        .task cad-icon {
            width: 16px;
            height: 16px;
        }
        .heading {
            height: 25px;
            border-bottom: 1px solid #c4c4c4;
            background: linear-gradient(#fafafa, #e8e8e8);
            font-weight: bold;
        }
        .task .collapse {
            width: 12px;
            height: 12px;
            margin-left: auto;
            color: #888;
            transform: rotate(180deg);
        }
        .new-body {
            height: 38px;
        }
        .status {
            display: flex;
            align-items: center;
            justify-content: flex-end;
            height: 30px;
            padding-right: 4px;
        }
        .status button {
            display: flex;
            align-items: center;
            gap: 2px;
            margin-left: 20px;
        }
        .status cad-icon {
            width: 14px;
            height: 14px;
        }
        .status .arrow {
            width: 9px;
            height: 9px;
            margin-left: 7px;
            color: #555;
        }
        .status .style .arrow {
            margin-left: 16px;
        }
    `;

    @state()
    private bodies = ['Body', 'Body001', 'Body002'];

    override render() {
        return html`
            <header class="title">
                <cad-icon name="freecad"></cad-icon>
                <span>cable winder 2 - FreeCAD 1.1.0</span>
                <div class="window">
                    <button aria-label="Minimize"><svg viewBox="0 0 10 10"><path d="M0 5.500h10" /></svg></button>
                    <button aria-label="Restore">
                        <svg viewBox="0 0 10 10"><path d="M.5 2.500h7v7h-7zM2.500 2.500v-2h7v7h-2" /></svg>
                    </button>
                    <button aria-label="Close"><svg viewBox="0 0 10 10"><path d="M0 0l10 10M10 0 0 10" /></svg></button>
                </div>
            </header>
            <nav class="menu">
                ${menus.map((name) => html`<button><u>${name[0]}</u>${name.slice(1)}</button>`)}
            </nav>
            <cad-toolbars></cad-toolbars>
            <main class="main">
                <aside class="left">
                    ${this.dock('Model')}
                    <ul class="tree">
                        <li class="root">
                            <cad-icon class="twist" name="caret"></cad-icon>
                            <button class="item"><cad-icon name="document"></cad-icon>cable winder 2</button>
                        </li>
                        ${this.bodies.map(
                            (name) => html`
                                <li>
                                    <cad-icon class="twist" name="caret"></cad-icon>
                                    <cad-icon name="eye"></cad-icon>
                                    <button class="item"><cad-icon name="body"></cad-icon>${name}</button>
                                </li>
                            `,
                        )}
                    </ul>
                    <section class="properties" aria-label="Properties"></section>
                    <div class="panes"><button>View</button><button class="active">Data</button></div>
                </aside>
                <section class="center">
                    <cad-viewport></cad-viewport>
                    <div class="tabs">
                        ${this.tab('freecad', 'Start', false)} ${this.tab('document', 'cable winder 2 : 1', true)}
                        <span class="rest"></span>
                    </div>
                </section>
                <aside class="right">
                    ${this.dock('Tasks')}
                    <section class="task">
                        <button class="heading">
                            <cad-icon name="startpart"></cad-icon>Start Part
                            <cad-icon class="collapse" name="caret"></cad-icon>
                        </button>
                        <button class="new-body"><cad-icon name="body"></cad-icon>New Body</button>
                    </section>
                </aside>
            </main>
            <footer class="status">
                <button aria-label="Notifications">
                    <cad-icon name="envelope"></cad-icon><cad-icon class="arrow" name="caret"></cad-icon>
                </button>
                <button class="style">
                    <cad-icon name="mouse"></cad-icon>Siemens NX<cad-icon class="arrow" name="caret"></cad-icon>
                </button>
                <button>456.03 mm x 332.01 mm<cad-icon class="arrow" name="caret"></cad-icon></button>
            </footer>
            <desktop-taskbar></desktop-taskbar>
        `;
    }

    private dock(title: string) {
        return html`
            <div class="dock">
                <span>${title}</span>
                <button aria-label="Collapse ${title}"><cad-icon name="dock"></cad-icon></button>
                <button aria-label="Float ${title}"><cad-icon name="float"></cad-icon></button>
                <button aria-label="Close ${title}"><cad-icon name="close"></cad-icon></button>
            </div>
        `;
    }

    private tab(icon: string, label: string, active: boolean) {
        return html`
            <div class=${classMap({ tab: true, active })}>
                <button class="name"><cad-icon name=${icon}></cad-icon>${label}</button>
                <button class="close" aria-label="Close ${label}"><cad-icon name="close"></cad-icon></button>
            </div>
        `;
    }
}

declare global {
    interface HTMLElementTagNameMap {
        'app-root': AppRoot;
        'cad-icon': CadIcon;
        'cad-toolbars': CadToolbars;
        'cad-viewport': CadViewport;
        'desktop-taskbar': DesktopTaskbar;
    }
}
